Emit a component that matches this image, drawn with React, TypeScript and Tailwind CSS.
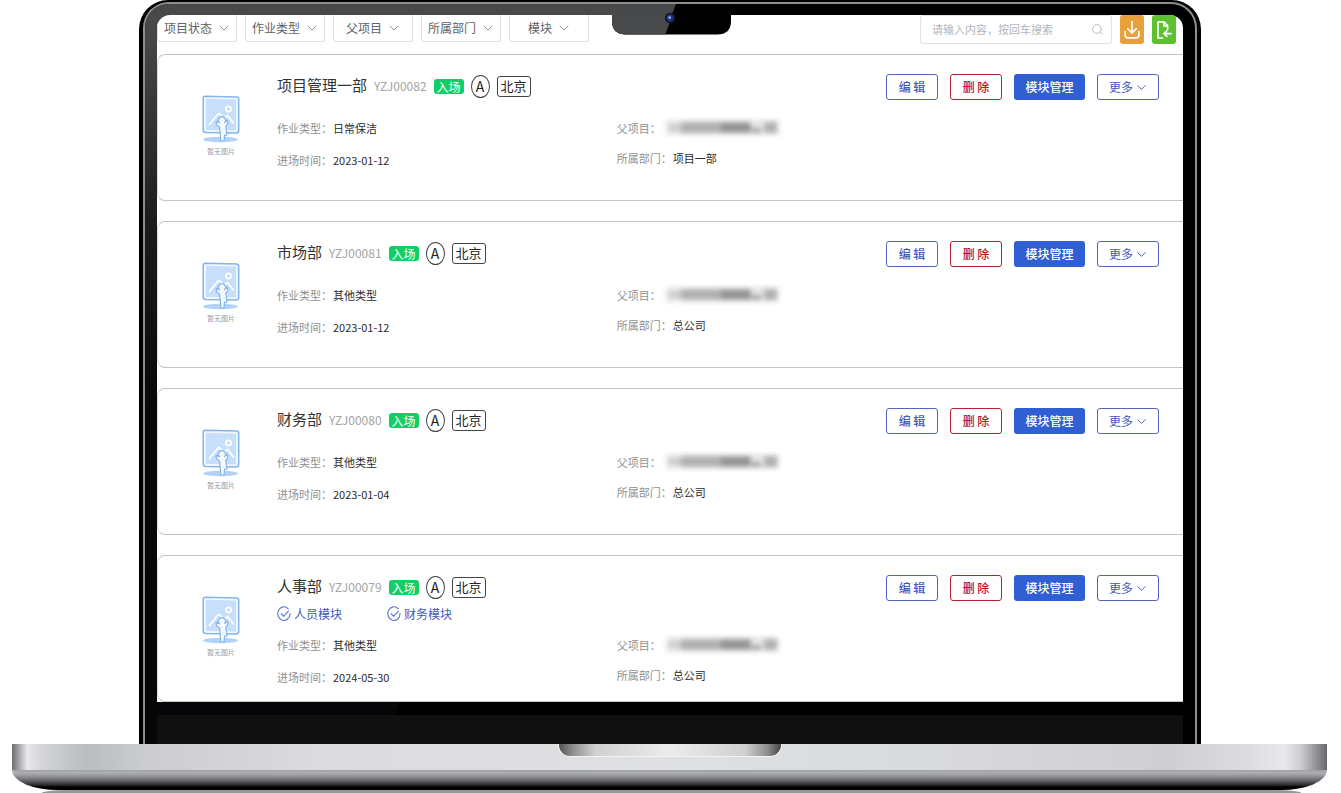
import React from "react";
import { ChevronDown, Search } from "lucide-react";

type Project = {
  name: string;
  code: string;
  type: string;
  date: string;
  department: string;
  modules?: string[];
};

const filters = ["项目状态", "作业类型", "父项目", "所属部门", "模块"];

const projects: Project[] = [
  { name: "项目管理一部", code: "YZJ00082", type: "日常保洁", date: "2023-01-12", department: "项目一部" },
  { name: "市场部", code: "YZJ00081", type: "其他类型", date: "2023-01-12", department: "总公司" },
  { name: "财务部", code: "YZJ00080", type: "其他类型", date: "2023-01-04", department: "总公司" },
  {
    name: "人事部",
    code: "YZJ00079",
    type: "其他类型",
    date: "2024-05-30",
    department: "总公司",
    modules: ["人员模块", "财务模块"],
  },
];

function EmptyPicture() {
  return (
    <svg width="38" height="48" viewBox="0 0 38 48" fill="none" aria-hidden="true">
      <ellipse cx="18.5" cy="44.5" rx="17.5" ry="2.8" fill="#b3d2f8" />
      <path d="M3.5 1.2 L34.5 2 Q36.7 2.1 36.7 4.2 V35.5 Q36.7 38 34 38 L4 37.6 Q1.2 37.5 1.2 35 V3.3 Q1.2 1.2 3.5 1.2Z" fill="#f2f8ff" stroke="#84b4ec" strokeWidth="1.5" />
      <path d="M4 3.8 L34 4.6 V35.4 L4 35Z" fill="#c7dffb" />
      <circle cx="26.5" cy="14" r="2.6" stroke="#fff" strokeWidth="1.6" />
      <path d="M7.5 29.5 L15.5 19.5 Q17 18 18.5 19.5 L22 23.5 L25.5 20.5 L31.5 28" stroke="#fff" strokeWidth="1.7" strokeLinecap="round" strokeLinejoin="round" />
      <path d="M17.4 27.6 A3.5 3.5 0 1 1 22.6 27.6 L25.2 25.4 Q27 28.5 23.8 31.2 L24.4 36 L25 39.8 L22.6 40.4 L22 46 H18.8 L18.2 38.5 L17.6 32 Q13.4 29.8 14.2 26.4Z" fill="#f4f9ff" stroke="#84b4ec" strokeWidth="1.2" strokeLinejoin="round" />
    </svg>
  );
}

function CheckMark() {
  return (
    <svg width="14" height="16" viewBox="0 0 14 16" fill="none" stroke="#5b78cc" strokeWidth="1.1" strokeLinecap="round" strokeLinejoin="round" aria-hidden="true">
      <path d="M11.2 2.8 A6.1 6.8 0 1 0 13 7.6" />
      <path d="M4.2 7.6 L6.6 10.4 L11.4 5.2" />
    </svg>
  );
}

function MaskedValue() {
  return (
    <svg width="124" height="22" viewBox="0 0 124 22" role="img" aria-label="已隐藏">
      <defs>
        <filter id="mask-blur" x="-10%" y="-40%" width="120%" height="180%">
          <feGaussianBlur stdDeviation="2.6" />
        </filter>
      </defs>
      <g filter="url(#mask-blur)">
        <rect x="5" y="3" width="113" height="15" fill="#e6e6e6" />
        <rect x="8" y="7" width="14" height="7" fill="#cccccc" />
        <rect x="20" y="5" width="44" height="11" fill="#b0b0b0" />
        <rect x="60" y="5" width="30" height="11" fill="#949494" />
        <rect x="91" y="11" width="9" height="5" fill="#a0a0a0" />
        <rect x="103" y="5" width="13" height="11" fill="#b0b0b0" />
      </g>
    </svg>
  );
}

function FilterSelect({ label }: { label: string }) {
  return (
    <label className="flex h-[27px] w-20 items-center justify-center gap-[3px] rounded-b-[3px] border border-t-0 border-[#dfe1e6] pl-0.5">
      <select aria-label={label} className="appearance-none bg-transparent text-xs text-[#606266] outline-none">
        <option>{label}</option>
      </select>
      <ChevronDown size={16} strokeWidth={1.5} className="text-[#8d9096]" />
    </label>
  );
}

function Toolbar() {
  return (
    <header className="flex h-[39px] items-start justify-between pr-[7px]">
      <div className="flex gap-2">
        {filters.map((label) => (
          <FilterSelect key={label} label={label} />
        ))}
      </div>
      <div className="flex items-start gap-2">
        <label className="flex h-[29px] w-48 items-center rounded-[3px] border border-[#dfe1e6] pr-[7px] pl-[11px]">
          <input
            type="search"
            aria-label="搜索"
            placeholder="请输入内容，按回车搜索"
            className="min-w-0 flex-1 bg-transparent text-[11px] text-[#606266] outline-none placeholder:text-[#b2b6be]"
          />
          <Search size={13} strokeWidth={1.7} className="text-[#b3b7bf]" />
        </label>
        <button aria-label="下载" className="flex h-[29px] w-6 items-center justify-center rounded-[3px] bg-[#eaa03a]">
          <svg width="18" height="20" viewBox="0 0 18 20" fill="none" stroke="#fff" strokeWidth="1.7" strokeLinecap="round" strokeLinejoin="round">
            <path d="M9 1.5 V13 M4.8 8.8 L9 13 L13.2 8.8" />
            <path d="M2.2 11.5 V15.6 Q2.2 17.8 4.4 17.8 H13.6 Q15.8 17.8 15.8 15.6 V11.5" />
          </svg>
        </button>
        <button aria-label="导入" className="flex h-[29px] w-6 items-center justify-center rounded-[3px] bg-[#5cc22f]">
          <svg width="18" height="20" viewBox="0 0 18 20" fill="none" stroke="#fff" strokeWidth="1.7" strokeLinecap="round" strokeLinejoin="round">
            <path d="M7.5 18 H3 V1.8 H9 L12.6 5.6 V9.2 M8.8 2 V6 H12.4" />
            <path d="M16 13.6 H9 M11.8 10.8 L8.8 13.6 L11.8 16.4" />
          </svg>
        </button>
      </div>
    </header>
  );
}

function Field({ label, children }: { label: string; children: React.ReactNode }) {
  return (
    <>
      <dt className="w-14 shrink-0 whitespace-nowrap text-[#909090]">{label}：</dt>
      <dd className="whitespace-nowrap text-[#2c2c2c]">{children}</dd>
    </>
  );
}

function ProjectCard({ project }: { project: Project }) {
  return (
    <article className="flex min-h-[147px] rounded-l-lg border-y border-l border-y-[#c4c4c4] border-l-[#dcdcdc] pt-[19px]">
      <div className="flex w-[119px] shrink-0 flex-col items-center gap-0.5 pt-[21px] pr-7 pl-[35px]">
        <EmptyPicture />
        <span className="text-[7px] leading-3 text-[#989ca4]">暂无图片</span>
      </div>
      <div className="min-w-0 flex-1">
        <div className="flex h-[26px] items-center justify-between pr-6">
          <div className="flex items-center gap-[7px] pb-0.5">
            <h2 className="pb-0.5 text-[15px] leading-5 text-[#333]">{project.name}</h2>
            <span className="text-xs text-[#a4a4a4]">{project.code}</span>
            <span className="rounded-[3px] bg-[#13ce66] px-[3px] text-xs leading-[15px] text-white">入场</span>
            <span className="flex h-[23px] w-[19px] items-center justify-center rounded-[50%] border border-[#444] text-sm text-[#222]">
              A
            </span>
            <span className="flex h-[21px] items-center rounded-[3px] border border-[#444] px-[3px] text-[13px] text-[#222]">
              北京
            </span>
          </div>
          <div className="flex gap-3 text-xs font-medium">
            <button className="h-[26px] w-[52px] rounded-[3px] border border-[#5265bb] text-[#4259bd]">编 辑</button>
            <button className="h-[26px] w-[52px] rounded-[3px] border border-[#bb2030] text-[#c01221]">删 除</button>
            <button className="h-[26px] w-[71px] rounded-[3px] bg-[#2f5fd3] text-white">模块管理</button>
            <button className="flex h-[26px] w-[62px] items-center justify-center gap-px rounded-[3px] border border-[#5265bb] pl-0.5 font-normal text-[#4259bd]">
              更多
              <ChevronDown size={15} strokeWidth={1.5} />
            </button>
          </div>
        </div>
        {project.modules ? (
          <ul className="flex h-7 items-center gap-[45px] pb-0.5 text-xs text-[#3c5bbb]">
            {project.modules.map((name) => (
              <li key={name} className="flex items-center gap-[3px]">
                <CheckMark />
                {name}
              </li>
            ))}
          </ul>
        ) : (
          <div className="h-3" />
        )}
        <div className="grid grid-cols-[3fr_5fr] text-[11px]">
          <dl>
            <div className="flex h-8 items-center">
              <Field label="作业类型">{project.type}</Field>
            </div>
            <div className="flex h-8 items-center">
              <Field label="进场时间">{project.date}</Field>
            </div>
          </dl>
          <dl>
            <div className="flex h-8 items-center">
              <dt className="w-11 shrink-0 whitespace-nowrap text-[#909090]">父项目：</dt>
              <dd>
                <MaskedValue />
              </dd>
            </div>
            <div className="flex h-7 items-center">
              <Field label="所属部门">{project.department}</Field>
            </div>
          </dl>
        </div>
      </div>
    </article>
  );
}

function BezelShade() {
  return (
    <svg className="absolute inset-0 h-full w-full" viewBox="0 0 1050 740" preserveAspectRatio="none" aria-hidden="true">
      <defs>
        <linearGradient id="bezel-shade" x1="0" y1="0" x2="0" y2="1">
          <stop offset="0" stopColor="#48494b" />
          <stop offset="0.05" stopColor="#464749" />
          <stop offset="0.3" stopColor="#1a1b1d" />
          <stop offset="0.55" stopColor="#08080b" />
          <stop offset="1" stopColor="#060608" />
        </linearGradient>
      </defs>
      <path d="M0 0 H531 L238 740 H0Z" fill="url(#bezel-shade)" />
    </svg>
  );
}

function CameraNotch() {
  return (
    <svg className="absolute -top-px left-1/2 -ml-[58px]" width="119" height="21" viewBox="0 0 119 21" aria-hidden="true">
      <defs>
        <clipPath id="notch-shape">
          <path d="M0 0 H119 V7 Q119 20.5 105 20.5 H14 Q0 20.5 0 7Z" />
        </clipPath>
      </defs>
      <g clipPath="url(#notch-shape)">
        <rect width="119" height="21" fill="#000" />
        <path d="M0 0 H61 L53 21 H0Z" fill="#48494b" />
      </g>
    </svg>
  );
}

function CameraLens() {
  return (
    <svg className="absolute -top-[3px] left-1/2 -ml-[6px]" width="12" height="12" viewBox="0 0 12 12" aria-hidden="true">
      <circle cx="6" cy="6" r="5.3" fill="#15172c" />
      <circle cx="6" cy="6" r="3.4" fill="#22357c" />
      <circle cx="5.6" cy="5.6" r="1.3" fill="#8fb0f2" />
    </svg>
  );
}

function LaptopBase() {
  return (
    <div>
      <div className="mr-[14px] ml-3">
        <div className="flex h-[26px] items-start justify-center bg-[linear-gradient(90deg,#6d6e71_0,#8d8d90_4px,#e8e8ea_15px,#d2d3d5_32px,#bbbcbe_75px,#cbcccd_130px,#dcdcde_310px,#dfe0e2_50%,#d9dadc_70%,#cfcfd1_88%,#dcdddf_94%,#e9e9eb_calc(100%_-_42px),#cdcdcf_calc(100%_-_26px),#68686b_100%)]">
          <div className="h-[13px] w-[224px] rounded-b-[12px] border border-t-0 border-[#f3f3f4] bg-[linear-gradient(90deg,#555_0,#8f8f8f_14px,#d0d0d0_36px,#ececec_50%,#d0d0d0_calc(100%_-_36px),#8f8f8f_calc(100%_-_14px),#444_100%)]" />
        </div>
        <div className="h-5 rounded-b-[46px_20px] bg-[linear-gradient(180deg,#a2a3a6_0,#adaeb1_3px,#8b8c8f_7px,#606164_11px,#2b2b2d_15px,#000_17px,#000_100%)]" />
      </div>
      <div className="mr-[40px] ml-[42px] h-[3px] rounded-t-[26px_3px] bg-[#979798]" />
    </div>
  );
}

export default function App() {
  return (
    <div className="overflow-hidden bg-white font-['Noto_Sans_CJK_SC',sans-serif]">
      <div className="mr-[140px] ml-[139px] rounded-t-[29px] bg-black px-1 pt-0.5">
        <div className="rounded-t-[26px] bg-[#8e8e8e] px-0.5 pt-0.5">
          <div className="relative overflow-hidden rounded-t-[24px] bg-black px-3 pt-[11px]">
            <BezelShade />
            <div className="relative rounded-t-[13px] bg-white">
              <div className="overflow-hidden rounded-t-[13px]">
                <Toolbar />
                <main className="flex flex-col gap-5">
                  {projects.map((project) => (
                    <ProjectCard key={project.code} project={project} />
                  ))}
                </main>
              </div>
              <CameraNotch />
              <CameraLens />
            </div>
            <div className="relative pt-[13px]">
              <div className="h-[29px] bg-[#121212]/90" />
            </div>
          </div>
        </div>
      </div>
      <LaptopBase />
    </div>
  );
}
